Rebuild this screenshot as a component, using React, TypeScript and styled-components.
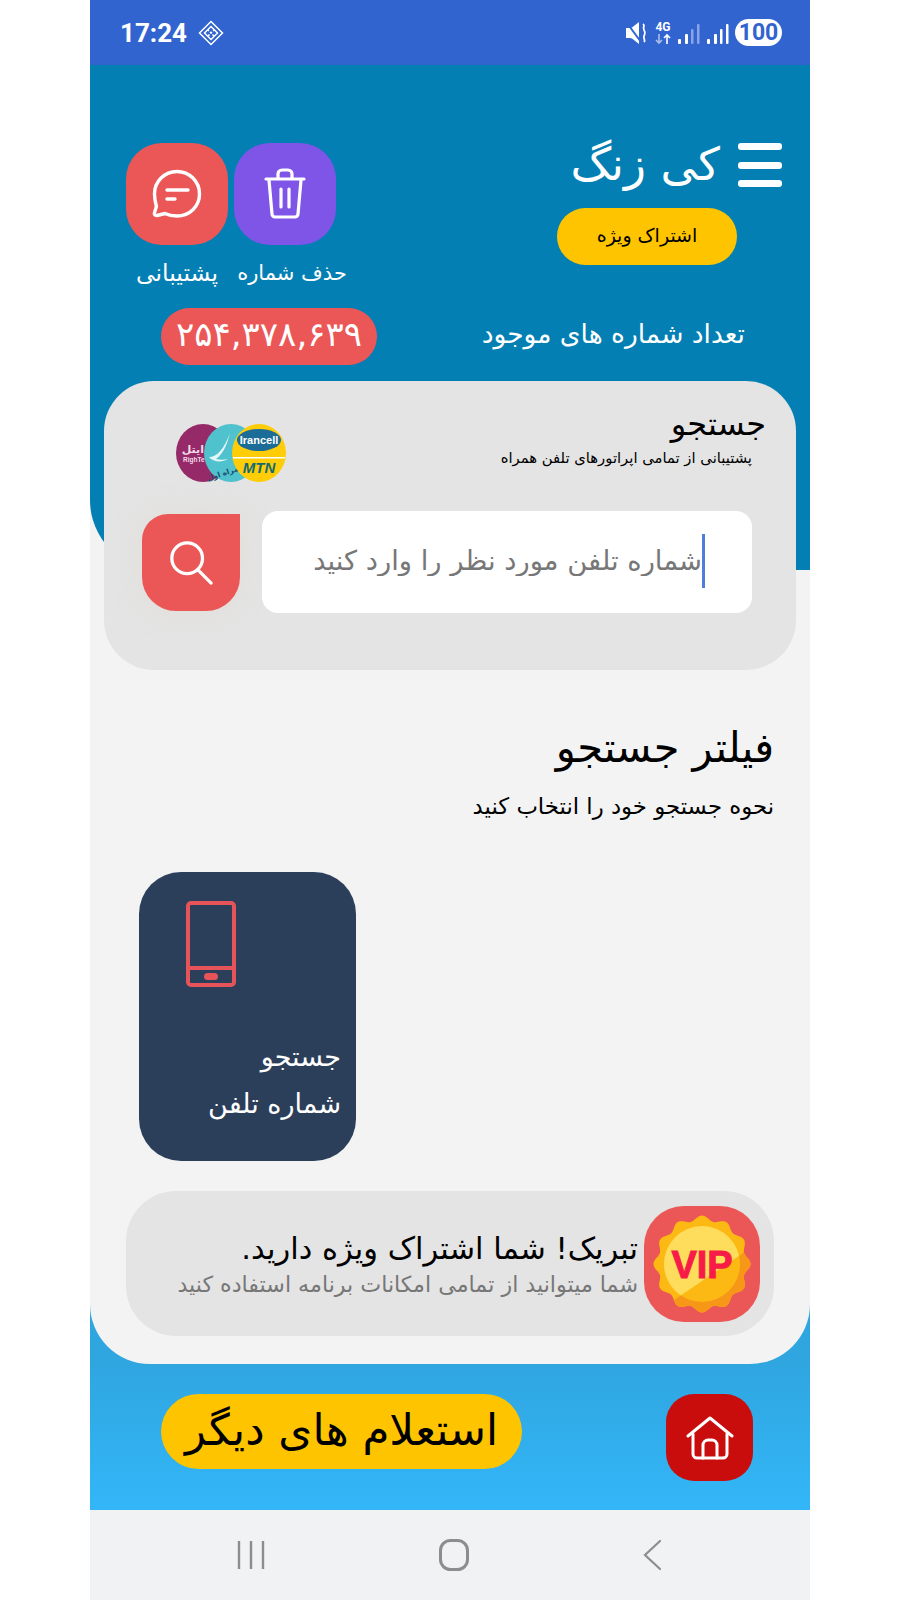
import React, { FC } from 'react';
import styled, { createGlobalStyle } from 'styled-components';

const FONT = `'DejaVu Sans', 'Noto Sans', sans-serif`;

const GlobalStyle = createGlobalStyle`
  html, body {
    margin: 0;
    padding: 0;
    background: #fff;
  }
  * {
    box-sizing: border-box;
  }
`;

// scalloped edge of the VIP badge
const badgePath = (cx: number, cy: number, r: number, bumps: number, depth: number) => {
  const points: string[] = [];
  for (let i = 0; i <= 240; i++) {
    const a = (i / 240) * Math.PI * 2;
    const rr = r + depth * Math.cos(a * bumps);
    points.push(`${(cx + rr * Math.sin(a)).toFixed(2)},${(cy - rr * Math.cos(a)).toFixed(2)}`);
  }
  return `M${points.join('L')}Z`;
};

const App: FC = () => (
  <>
    <GlobalStyle />
    <Screen dir="rtl">
      <StatusBar dir="ltr">
        <StatusLeft>
          <Clock>17:24</Clock>
          <svg width="26" height="26" viewBox="0 0 26 26" fill="none" stroke="#fff" strokeWidth="1.5">
            <path d="M13 1.5 24.5 13 13 24.5 1.5 13Z" />
            <path d="M13 6.5 19.5 13 13 19.5 6.5 13Z" />
            <path d="M9.5 9.5 16.5 16.5M16.5 9.5 9.5 16.5" strokeDasharray="2 1.5" />
          </svg>
        </StatusLeft>
        <StatusRight>
          <svg width="24" height="24" viewBox="0 0 24 24">
            <path d="M1 7h4l2-.5L14 1v22l-7-5.500L5 17H1Z" fill="#fff" />
            <path d="M2 2 16 21" stroke="#3264d0" strokeWidth="2" />
            <path d="M18 3c3 2-1 3 1 6s1 3 0 6 2 4 0 6" stroke="#fff" strokeWidth="1.8" fill="none" />
          </svg>
          <svg width="18" height="26" viewBox="0 0 18 26">
            <text x="9" y="11" textAnchor="middle" fontFamily="Roboto, sans-serif" fontWeight="700" fontSize="12" fill="#fff">4G</text>
            <path d="M5 14v9M2 20l3 3 3-3" stroke="#a9bdeb" strokeWidth="1.6" fill="none" />
            <path d="M13 24v-9M10 18l3-3 3 3" stroke="#fff" strokeWidth="1.6" fill="none" />
          </svg>
          <svg width="24" height="24" viewBox="0 0 24 24" fill="#fff">
            <rect x="1" y="18" width="3" height="5" rx="1" />
            <rect x="8" y="13" width="3" height="10" rx="1" />
            <rect x="14" y="8" width="2.5" height="15" rx="1" fill="#8aa5e6" />
            <rect x="20" y="3" width="2.5" height="20" rx="1" fill="#8aa5e6" />
          </svg>
          <svg width="24" height="24" viewBox="0 0 24 24" fill="#fff">
            <rect x="1" y="18" width="3" height="5" rx="1" />
            <rect x="8" y="13" width="3" height="10" rx="1" />
            <rect x="14" y="8" width="2.5" height="15" rx="1" />
            <rect x="20" y="3" width="2.5" height="20" rx="1" />
          </svg>
          <Battery>100</Battery>
        </StatusRight>
      </StatusBar>

      <Sheet>
        <Header>
          <TopRow>
            <Brand>
              <BrandLine>
                <Burger>
                  <span />
                  <span />
                  <span />
                </Burger>
                <BrandName>کی زنگ</BrandName>
              </BrandLine>
              <PremiumButton>اشتراک ویژه</PremiumButton>
            </Brand>
            <Actions>
              <Action>
                <ActionTile $color="#7f55e8">
                  <svg width="44" height="52" viewBox="0 0 44 52" fill="none" stroke="#fff" strokeWidth="3.2" strokeLinecap="round" strokeLinejoin="round">
                    <path d="M3 11h38" />
                    <path d="M15 10V6a4 4 0 0 1 4-4h6a4 4 0 0 1 4 4v4" />
                    <path d="M6 12l3 34a3 3 0 0 0 3 3h20a3 3 0 0 0 3-3l3-34" />
                    <path d="M18 21v18M26 21v18" />
                  </svg>
                </ActionTile>
                <ActionLabel $size={21} $shift={-14}>حذف شماره</ActionLabel>
              </Action>
              <Action>
                <ActionTile $color="#eb5757">
                  <svg width="50" height="50" viewBox="0 0 50 50" fill="none" stroke="#fff" strokeWidth="3.4" strokeLinecap="round" strokeLinejoin="round">
                    <path d="M25 2.5c12.5 0 22.5 10 22.5 22.5S37.5 47 25 47c-4 0-9-1-12-2.500l-8 2c-1.800.4-3-1-2.600-2.600l2-6.400C3.500 34 2.500 29.500 2.500 25 2.500 12.500 12.500 2.500 25 2.500Z" />
                    <path d="M15 21h21M15 30h8" />
                  </svg>
                </ActionTile>
                <ActionLabel $size={23.5} $shift={0}>پشتیبانی</ActionLabel>
              </Action>
            </Actions>
          </TopRow>
          <CountRow>
            <CountLabel>تعداد شماره های موجود</CountLabel>
            <CountPill>۲۵۴,۳۷۸,۶۳۹</CountPill>
          </CountRow>
        </Header>

        <SearchCard>
          <CardHead>
            <div>
              <CardTitle>جستجو</CardTitle>
              <CardSub>پشتیبانی از تمامی اپراتورهای تلفن همراه</CardSub>
            </div>
            <OperatorLogos width="112" height="60" viewBox="0 0 112 60">
              <ellipse cx="28" cy="30" rx="27" ry="29" fill="#962a68" />
              <text x="29" y="30" textAnchor="end" fontFamily={FONT} fontSize="11" fontWeight="700" fill="#f4dbe8">ایتل</text>
              <text x="8" y="39" fontFamily="'Liberation Sans', sans-serif" fontSize="6.500" fontWeight="700" fill="#f4dbe8">RighTe</text>
              <ellipse cx="56" cy="30" rx="27" ry="29" fill="#4fc2cd" />
              <path d="M34 34c8 0 15-8 21-24-3 12-7 21-14 26 4 1 8 1 12 0-6 4-15 3-19-2Z" fill="#fff" opacity=".85" />
              <text x="51" y="52" textAnchor="middle" fontFamily={FONT} fontSize="7.500" fontWeight="700" fill="#1c4f6e" transform="rotate(-18 51 52)">همراه اول</text>
              <ellipse cx="84" cy="30" rx="27" ry="29" fill="#ffcc08" />
              <ellipse cx="84" cy="17" rx="22" ry="11" fill="#1b6c97" />
              <text x="84" y="21" textAnchor="middle" fontFamily="'Liberation Sans', sans-serif" fontSize="11" fontWeight="700" fill="#fff">Irancell</text>
              <rect x="58" y="34" width="52" height="1.500" fill="#fff" />
              <text x="84" y="50" textAnchor="middle" fontFamily="'Liberation Sans', sans-serif" fontSize="15" fontStyle="italic" fontWeight="700" fill="#126b70">MTN</text>
            </OperatorLogos>
          </CardHead>
          <SearchRow>
            <SearchField>
              <SearchInput placeholder="شماره تلفن مورد نظر را وارد کنید" readOnly />
              <Caret />
            </SearchField>
            <SearchButton>
              <svg width="46" height="46" viewBox="0 0 48 48" fill="none" stroke="#fff" strokeWidth="3.400" strokeLinecap="round">
                <circle cx="20" cy="19" r="16" />
                <path d="M31 31l14 14" />
              </svg>
            </SearchButton>
          </SearchRow>
        </SearchCard>

        <FilterHead>
          <FilterTitle>فیلتر جستجو</FilterTitle>
          <FilterSub>نحوه جستجو خود را انتخاب کنید</FilterSub>
        </FilterHead>

        <FilterGrid>
          <FilterTile>
            <PhoneIcon width="50" height="86" viewBox="0 0 50 86" fill="none" stroke="#e65358" strokeWidth="4" strokeLinejoin="round">
              <rect x="2" y="2" width="46" height="82" rx="3" />
              <path d="M2 67h46" />
              <rect x="20" y="74" width="10" height="3" rx="1.500" fill="#e65358" />
            </PhoneIcon>
            <TileText>
              جستجو
              <br />
              شماره تلفن
            </TileText>
          </FilterTile>
        </FilterGrid>

        <VipBanner>
          <VipIcon>
            <svg width="100" height="100" viewBox="0 0 100 100">
              <clipPath id="vipLower">
                <path d="M0 101 100 33V110H0Z" />
              </clipPath>
              <clipPath id="vipUpper">
                <path d="M0 101 100 33V-10H0Z" />
              </clipPath>
              <path d={badgePath(50, 50, 46, 12, 2.5)} fill="#fdb913" />
              <path d={badgePath(50, 50, 46, 12, 2.5)} fill="#f79718" clipPath="url(#vipLower)" />
              <circle cx="50" cy="50" r="38" fill="#fdb913" />
              <circle cx="50" cy="50" r="38" fill="#fedd5d" clipPath="url(#vipUpper)" />
              <text x="50" y="64" textAnchor="middle" fontFamily="'Liberation Sans', sans-serif" fontSize="38" fontWeight="700" stroke="#f71c47" strokeWidth="1" fill="#f71c47">VIP</text>
            </svg>
          </VipIcon>
          <div>
            <VipTitle>تبریک! شما اشتراک ویژه دارید.</VipTitle>
            <VipSub>شما میتوانید از تمامی امکانات برنامه استفاده کنید</VipSub>
          </div>
        </VipBanner>
      </Sheet>

      <BottomRow>
        <HomeButton>
          <svg width="48" height="44" viewBox="0 0 48 44" fill="none" stroke="#fff" strokeWidth="3" strokeLinecap="round" strokeLinejoin="round">
            <path d="M2 20 24 2l22 18" />
            <path d="M7 18v20a4 4 0 0 0 4 4h26a4 4 0 0 0 4-4V18" />
            <path d="M17 42V29a5 5 0 0 1 5-5h4a5 5 0 0 1 5 5v13" />
          </svg>
        </HomeButton>
        <MoreButton>استعلام های دیگر</MoreButton>
      </BottomRow>

      <NavBar dir="ltr">
        <svg width="30" height="30" viewBox="0 0 30 30" stroke="#8d8d8f" strokeWidth="2.400">
          <path d="M3 1v28M15 1v28M27 1v28" />
        </svg>
        <svg width="30" height="32" viewBox="0 0 30 32" fill="none" stroke="#8d8d8f" strokeWidth="3">
          <rect x="1.500" y="1.500" width="27" height="29" rx="10" />
        </svg>
        <svg width="20" height="32" viewBox="0 0 20 32" fill="none" stroke="#8d8d8f" strokeWidth="2.200" strokeLinecap="round">
          <path d="M18 2 3 16l15 14" />
        </svg>
      </NavBar>
    </Screen>
  </>
);

export default App;

const Screen = styled.div`
  width: 720px;
  height: 1600px;
  margin: 0 auto;
  display: flex;
  flex-direction: column;
  font-family: ${FONT};
  background: linear-gradient(#2fa6e0 1364px, #33b6f8 1510px);
  overflow: hidden;
`;

const StatusBar = styled.div`
  height: 65px;
  flex: none;
  padding: 0 28px 0 30px;
  display: flex;
  align-items: center;
  justify-content: space-between;
  background: #3264d0;
  color: #fff;
`;

const StatusLeft = styled.div`
  display: flex;
  align-items: center;
  gap: 11px;
`;

const Clock = styled.span`
  font-family: Roboto, sans-serif;
  font-size: 26px;
  font-weight: 700;
`;

const StatusRight = styled.div`
  display: flex;
  align-items: center;
  gap: 5px;
`;

const Battery = styled.span`
  width: 47px;
  height: 27px;
  border-radius: 14px;
  background: #fff;
  color: #3264d0;
  font-family: Roboto, sans-serif;
  font-size: 23px;
  font-weight: 700;
  line-height: 27px;
  text-align: center;
`;

const Sheet = styled.div`
  height: 1299px;
  flex: none;
  background: #f3f3f4;
  border-radius: 0 0 60px 60px;
`;

const Header = styled.div`
  height: 505px;
  padding: 78px 28px 0 36px;
  background: #037fb3;
  border-bottom-left-radius: 70px;
`;

const TopRow = styled.div`
  display: flex;
  justify-content: space-between;
  align-items: flex-start;
`;

const Brand = styled.div`
  display: flex;
  flex-direction: column;
  align-items: flex-start;
`;

const BrandLine = styled.div`
  height: 44px;
  display: flex;
  align-items: center;
  gap: 18px;
`;

const Burger = styled.div`
  width: 44px;
  height: 44px;
  display: flex;
  flex-direction: column;
  justify-content: space-between;

  span {
    height: 7px;
    border-radius: 3px;
    background: #fff;
  }
`;

const BrandName = styled.div`
  color: #fff;
  font-size: 45.500px;
  line-height: 44px;
  white-space: nowrap;
`;

const PremiumButton = styled.div`
  width: 180px;
  height: 57px;
  margin: 21px 45px 0 0;
  border-radius: 29px;
  background: #ffc400;
  color: #000;
  font-size: 19px;
  line-height: 55px;
  text-align: center;
`;

const Actions = styled.div`
  display: flex;
  gap: 6px;
`;

const Action = styled.div`
  width: 102px;
  display: flex;
  flex-direction: column;
  align-items: center;
`;

const ActionTile = styled.div<{ $color: string }>`
  width: 102px;
  height: 102px;
  border-radius: 36px;
  background: ${(p) => p.$color};
  display: flex;
  align-items: center;
  justify-content: center;
`;

const ActionLabel = styled.div<{ $size: number; $shift: number }>`
  margin-top: 13px;
  margin-right: ${(p) => p.$shift}px;
  color: #fff;
  font-size: ${(p) => p.$size}px;
  line-height: 30px;
  white-space: nowrap;
`;

const CountRow = styled.div`
  margin: 20px 37px 0 35px;
  display: flex;
  align-items: center;
  justify-content: space-between;
`;

const CountLabel = styled.div`
  padding-bottom: 6px;
  color: #fff;
  font-size: 26.500px;
  white-space: nowrap;
`;

const CountPill = styled.div`
  width: 216px;
  height: 57px;
  border-radius: 29px;
  background: #eb5757;
  color: #fff;
  font-size: 34px;
  line-height: 52px;
  text-align: center;
`;

// sits over the bottom of the blue header
const SearchCard = styled.div`
  position: relative;
  height: 289px;
  margin: -189px 14px 0;
  padding: 22px 44px 0 37px;
  border-radius: 50px;
  background: #e4e4e4;
`;

const CardHead = styled.div`
  height: 108px;
  display: flex;
  justify-content: space-between;
  align-items: flex-start;
  padding-left: 34px;
`;

const OperatorLogos = styled.svg`
  margin-top: 20px;
  flex: none;
  direction: ltr;

  text {
    direction: ltr;
  }
`;

const CardTitle = styled.div`
  margin-right: -14px;
  font-size: 32px;
  line-height: 42px;
  color: #000;
`;

const CardSub = styled.div`
  margin-top: 3px;
  font-size: 14.800px;
  line-height: 20px;
  color: #000;
`;

const SearchRow = styled.div`
  display: flex;
  align-items: flex-start;
  gap: 22px;
`;

const SearchField = styled.div`
  position: relative;
  width: 490px;
  height: 102px;
`;

const SearchInput = styled.input`
  width: 100%;
  height: 100%;
  padding: 0 50px 4px 10px;
  border: 0;
  outline: 0;
  border-radius: 16px;
  background: #fff;
  font-family: ${FONT};
  font-size: 27.400px;
  color: #222;

  &::placeholder {
    color: #777;
    opacity: 1;
  }
`;

const Caret = styled.span`
  position: absolute;
  top: 23px;
  right: 47px;
  width: 3px;
  height: 54px;
  background: #4f7fdb;
`;

const SearchButton = styled.div`
  width: 98px;
  height: 97px;
  margin-top: 3px;
  border-radius: 26px 0 34px 34px;
  background: #eb5757;
  display: flex;
  align-items: center;
  justify-content: center;
  box-shadow: 0 0 24px rgba(225, 220, 205, 0.5);
`;

const FilterHead = styled.div`
  padding: 50px 36px 0 0;
`;

const FilterTitle = styled.div`
  font-size: 41.500px;
  line-height: 56px;
  color: #000;
`;

const FilterSub = styled.div`
  margin-top: 14px;
  font-size: 22.800px;
  line-height: 32px;
  color: #000;
`;

const FilterGrid = styled.div`
  margin-top: 50px;
  padding-left: 49px;
  display: flex;
  justify-content: flex-end;
`;

const FilterTile = styled.div`
  width: 217px;
  height: 289px;
  padding: 29px 15px 0 0;
  border-radius: 42px;
  background: #2c3f5a;
  color: #fff;
  display: flex;
  flex-direction: column;
`;

const PhoneIcon = styled.svg`
  align-self: flex-end;
  margin-left: 47px;
`;

const TileText = styled.div`
  margin-top: 46px;
  font-size: 27px;
  line-height: 47px;
`;

const VipBanner = styled.div`
  height: 145px;
  margin: 30px 36px 0;
  padding: 0 14px;
  border-radius: 50px;
  background: #e4e4e4;
  display: flex;
  align-items: center;
  gap: 6px;
`;

const VipIcon = styled.div`
  width: 116px;
  height: 116px;
  flex: none;
  border-radius: 40px;
  background: #eb5757;
  display: flex;
  align-items: center;
  justify-content: center;
`;

const VipTitle = styled.div`
  font-size: 30.500px;
  line-height: 40px;
  color: #000;
`;

const VipSub = styled.div`
  font-size: 22.200px;
  line-height: 30px;
  color: #777;
  white-space: nowrap;
`;

const BottomRow = styled.div`
  flex: 1;
  padding: 30px 57px 0 71px;
  display: flex;
  justify-content: space-between;
  align-items: flex-start;
`;

const HomeButton = styled.div`
  width: 87px;
  height: 87px;
  border-radius: 28px;
  background: #c90c0c;
  display: flex;
  align-items: center;
  justify-content: center;
`;

const MoreButton = styled.div`
  width: 361px;
  height: 75px;
  border-radius: 38px;
  background: #ffc400;
  color: #000;
  font-size: 43.500px;
  line-height: 73px;
  text-align: center;
  white-space: nowrap;
`;

const NavBar = styled.div`
  height: 90px;
  flex: none;
  padding: 0 148px 0 146px;
  background: #f1f2f4;
  display: flex;
  align-items: center;
  justify-content: space-between;
`;
